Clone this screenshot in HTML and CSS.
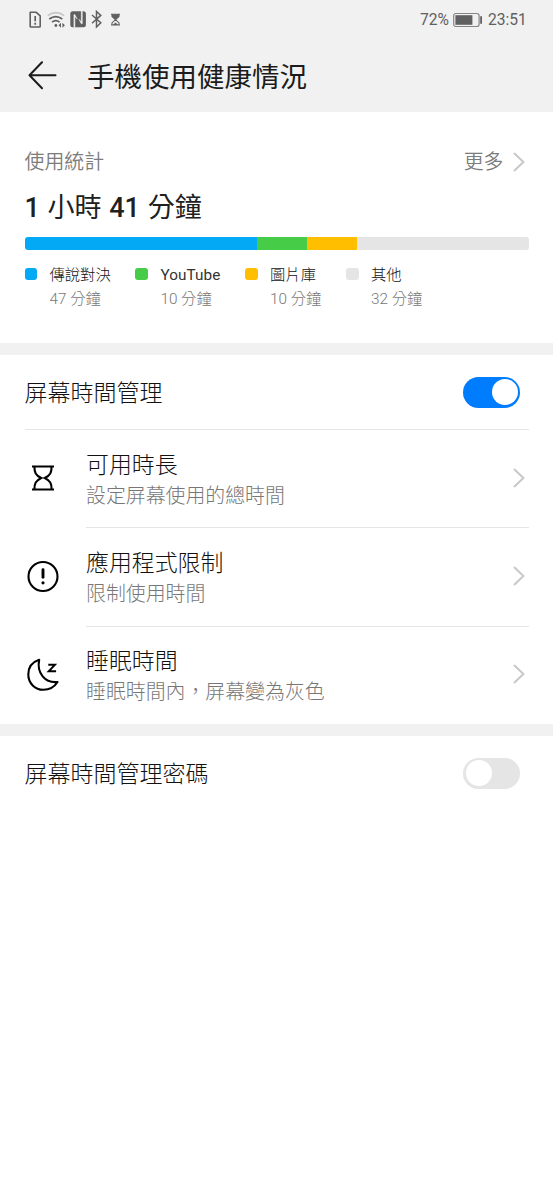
FILE: index.html
```html
<!DOCTYPE html>
<html lang="zh-Hant">
<head>
<meta charset="utf-8">
<title>手機使用健康情況</title>
<link rel="stylesheet" href="styles.css">
</head>
<body>
<header class="header">
  <div class="status">
    <svg class="status-icons" width="100" height="24" viewBox="0 0 100 24" fill="none" stroke="#606060">
      <path d="M3.2 4.3h6.1l3.9 3.6v10.3q0 .8-.8.8H4q-.8 0-.8-.8z" stroke-width="1.6" stroke-linejoin="round"/>
      <path d="M8.2 8v5.3M8.2 14.7v2" stroke-width="1.7"/>
      <path d="M20.7 7.7c5-4 11.5-4 16.5 0" stroke="#c8c8c8" stroke-width="1.7"/>
      <path d="M22.3 11c4-3 9-3 13 0M25 14.1c2.5-1.8 5.2-1.8 7.6 0" stroke-width="1.7"/>
      <circle cx="28.9" cy="17.5" r="1.4" fill="#606060" stroke="none"/>
      <path d="M34 14.7v5l-2.5-2.5zM35.4 14.7v5l2.5-2.5z" fill="#606060" stroke="none"/>
      <rect x="43.3" y="3.2" width="15.6" height="16" rx="2.5" fill="#606060" stroke="none"/>
      <path d="M46.9 19.3V6.8l.9-.3 2.4 4.6-2.3-2.7v10.9zM55.3 3.1v12.5l-.9.3-2.4-4.6 2.3 2.7V3.1z" fill="#f1f1f1" stroke="#f1f1f1" stroke-width=".5"/>
      <path d="M65 7l8.8 7.8-4.3 4.2V3.4l4.3 4-8.8 7.8" stroke-width="1.5"/>
      <path d="M84 6.2h9M84 17h9M85 6v2.4l3.5 3.2-3.5 3.3v2.2M92 6v2.4l-3.5 3.2 3.5 3.3v2.2" stroke-width="1.1"/>
      <path d="M85 6.2h7v2.3L88.5 12 85 8.5zM85.7 17l2.8-2.4 2.8 2.4z" fill="#606060" stroke="none"/>
    </svg>
    <div class="status-right">
      <span class="battery-text">72%</span>
      <svg width="32" height="18" viewBox="0 0 32 18">
        <rect x="1.7" y="2.5" width="25.4" height="13" rx="2.2" fill="none" stroke="#858585" stroke-width="1.2"/>
        <path d="M3.4 4.2h17v9.6h-17z" fill="#606060"/>
        <path d="M28.2 5.2h1.8v7.6h-1.8z" fill="#606060"/>
      </svg>
      <span class="clock">23:51</span>
    </div>
  </div>
  <div class="titlebar">
    <svg width="30" height="30" viewBox="0 0 30 30" fill="none" stroke="#1c1c1c" stroke-width="2" stroke-linecap="round" stroke-linejoin="round"><path d="M28.5 14.3h-26M15 1.3L2.5 14.3l12.5 13"/></svg>
    <h1 class="title">手機使用健康情況</h1>
  </div>
</header>
<main>
  <section class="stats">
    <div class="stats-head"><span>使用統計</span><span class="more">更多<svg class="chevron" width="14" height="22" viewBox="0 0 14 22"><path d="M2 2l9.4 9L2 20"/></svg></span></div>
    <div class="total"><b>1</b> 小時 <b>41</b> 分鐘</div>
    <div class="bar"><i class="seg game"></i><i class="seg video"></i><i class="seg gallery"></i><i class="seg other"></i></div>
    <div class="legend">
      <div class="item"><i class="swatch game-color"></i><div>傳說對決<small>47 分鐘</small></div></div>
      <div class="item"><i class="swatch video-color"></i><div><span class="latin">YouTube</span><small>10 分鐘</small></div></div>
      <div class="item"><i class="swatch gallery-color"></i><div>圖片庫<small>10 分鐘</small></div></div>
      <div class="item"><i class="swatch other-color"></i><div>其他<small>32 分鐘</small></div></div>
    </div>
  </section>
  <section class="group">
    <div class="switch-row"><span class="label">屏幕時間管理</span><span class="toggle on"></span></div>
    <div class="row first">
      <svg class="icon" width="36" height="36" viewBox="0 0 36 36" fill="none" stroke="#000" stroke-width="2.1"><path d="M7 6.5h22M7 29.5h22M9.4 6.5c0 6 1.2 8.6 6.8 11.5-5.6 2.9-6.8 5.5-6.8 11.5M26.6 6.5c0 6-1.2 8.6-6.8 11.5 5.6 2.9 6.8 5.5 6.8 11.5"/></svg>
      <div class="body"><div class="text">可用時長<small>設定屏幕使用的總時間</small></div><svg class="chevron" width="14" height="22" viewBox="0 0 14 22"><path d="M2 2l9.4 9L2 20"/></svg></div>
    </div>
    <div class="row">
      <svg class="icon" width="36" height="36" viewBox="0 0 36 36" fill="none" stroke="#000" stroke-width="2.1"><circle cx="18" cy="17.5" r="14.5"/><path d="M18 10.7v7.5" stroke-width="2.9" stroke-linecap="round"/><circle cx="18" cy="23.8" r="1.6" fill="#000" stroke="none"/></svg>
      <div class="body"><div class="text">應用程式限制<small>限制使用時間</small></div><svg class="chevron" width="14" height="22" viewBox="0 0 14 22"><path d="M2 2l9.4 9L2 20"/></svg></div>
    </div>
    <div class="row">
      <svg class="icon" width="36" height="36" viewBox="0 0 36 36" fill="none" stroke="#000" stroke-width="2.1" stroke-linejoin="round"><path d="M14.2 2.8C7.5 5 3.3 10.5 3.3 17.5c0 8.7 6.7 15.3 15 15.3 6 0 11.1-2.8 14.2-7.8C20 26.3 11.5 16 14.2 2.8z"/><path d="M23.3 7.7H30l-6.3 6.6h7.4" stroke-width="1.9" stroke-linejoin="miter"/></svg>
      <div class="body"><div class="text">睡眠時間<small>睡眠時間內，屏幕變為灰色</small></div><svg class="chevron" width="14" height="22" viewBox="0 0 14 22"><path d="M2 2l9.4 9L2 20"/></svg></div>
    </div>
  </section>
  <section class="group">
    <div class="switch-row"><span class="label">屏幕時間管理密碼</span><span class="toggle"></span></div>
  </section>
</main>
</body>
</html>
```
FILE: styles.css
```css
* { box-sizing: border-box; }
body { margin: 0; min-height: 1200px; background: #fff; color: #111; font-family: Roboto, "Noto Sans CJK TC", sans-serif; font-weight: 300; }
svg { display: block; flex: none; }
.header { height: 112px; background: #f1f1f1; }
.status { height: 40px; padding: 0 27px 0 27px; display: flex; align-items: center; justify-content: space-between; color: #606060; font-size: 15.6px; font-weight: 400; }
.status-icons { margin-top: -1px; }
.status-right { display: flex; align-items: center; gap: 4px; }
.battery-text { width: 28px; }
.clock { width: 38px; }
.titlebar { display: flex; align-items: center; height: 72px; padding: 0 27px; gap: 30px; }
.title { margin: 4px 0 0; font-size: 27.5px; line-height: 40px; font-weight: 400; color: #1c1c1c; }
.stats { height: 231px; padding: 36px 24.5px 0; }
.stats-head { display: flex; justify-content: space-between; height: 30px; line-height: 30px; font-size: 19.9px; font-weight: 350; color: #7c7c7c; }
.more { display: flex; align-items: center; gap: 8px; margin-right: 3px; }
.stats-head .chevron { margin-top: -3px; }
.chevron { fill: none; stroke: #c8c8c8; stroke-width: 2; }
.total { height: 40px; margin-top: 10px; font-size: 27px; line-height: 40px; font-weight: 400; word-spacing: 1px; white-space: nowrap; color: #202020; }
.total b { font-weight: 500; }
.bar { display: flex; height: 12.5px; margin-top: 9px; border-radius: 3px; overflow: hidden; }
.seg { display: block; }
.game { width: 232px; }
.video, .gallery { width: 50.2px; }
.other { flex: 1; }
.game, .game-color { background: #03a9f4; }
.video, .video-color { background: #47cc47; }
.gallery, .gallery-color { background: #ffbf00; }
.other, .other-color { background: #e5e5e5; }
.legend { display: flex; gap: 24.7px; margin-top: 13px; }
.item { display: flex; gap: 12.5px; font-size: 15.3px; line-height: 24px; white-space: nowrap; }
.latin { font-weight: 400; letter-spacing: .08px; color: #333; }
.item small { display: block; font-size: 15.3px; line-height: 24px; color: #777; }
.swatch { width: 12.5px; height: 12.5px; margin-top: 5px; border-radius: 3px; flex: none; }
.group { border-top: 12px solid #f1f1f1; }
.switch-row { display: flex; align-items: center; justify-content: space-between; height: 74px; padding: 0 33px 0 24.5px; font-size: 23px; line-height: 34px; }
.label { padding-top: 3px; }
.toggle { width: 57px; height: 31px; padding: 2.5px; border-radius: 16px; background: #e5e5e5; display: flex; }
.toggle::before { content: ""; width: 26px; height: 26px; border-radius: 50%; background: #fff; }
.toggle.on { background: #007dff; justify-content: flex-end; }
.row { display: flex; align-items: center; height: 98.4px; padding: 0 24.5px 0 25px; gap: 25px; }
.body { flex: 1; display: flex; height: 100%; align-items: center; justify-content: space-between; padding-right: 3px; border-top: 1px solid #e5e5e5; }
.body .chevron { margin-top: -2px; }
.first { position: relative; }
.first::before { content: ""; position: absolute; top: 0; left: 24.5px; width: 61.5px; height: 1px; background: #e5e5e5; }
.text { padding-top: 4px; font-size: 22.9px; line-height: 31px; }
.text small { display: block; font-size: 19.9px; line-height: 31px; color: #777; }
```
